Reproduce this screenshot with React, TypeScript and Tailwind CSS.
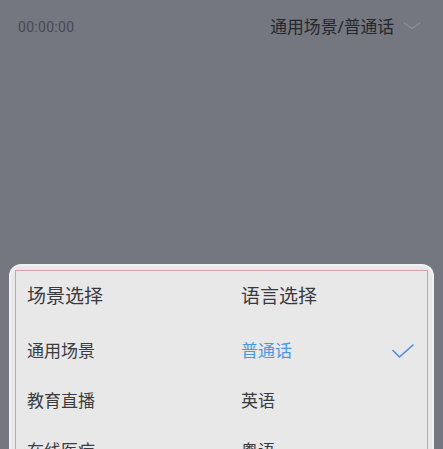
import React from "react";

const scenes = ["通用场景", "教育直播", "在线医疗"];
const langs = ["普通话", "英语", "粤语"];

export default function App() {
  return (
    <div
      className="h-[449px] w-full overflow-hidden bg-[#747680]"
      style={{ fontFamily: '"Noto Sans", "Noto Sans CJK SC", sans-serif' }}
    >
      {/* Top bar */}
      <header className="flex h-[54px] items-center justify-between pl-[18px] pr-[22px]">
        <span className="text-[14px] tracking-[0.3px] text-[#474953]" style={{ fontFamily: "Roboto, sans-serif" }}>
          00:00:00
        </span>
        <div className="flex items-center gap-[9px]">
          <span className="text-[16.8px] text-[#26272c]">通用场景/普通话</span>
          <svg width="18" height="10" viewBox="0 0 18 10" fill="none" className="mt-[-2px]">
            <path d="M1 2 L9 7.5 L17 2" stroke="#8c8e98" strokeWidth="1.5" strokeLinecap="round" strokeLinejoin="round" />
          </svg>
        </div>
      </header>

      {/* Bottom sheet */}
      <div className="mx-[9px] mt-[210px] h-[200px] rounded-t-[12px] border-2 border-b-0 border-[#f1f1f3] bg-[#e8e8e9] px-[4px] pt-[4px]">
        <div className="h-full border border-b-0 border-[#d3a2a9] pl-[11px] pr-[13px] pt-[12px]">
          <div className="flex text-[19px] leading-[26px] text-[#38393d]">
            <div className="w-[214px]">场景选择</div>
            <div>语言选择</div>
          </div>
          <div className="mt-[17px]">
            {scenes.map((s, i) => (
              <div key={s} className="flex h-[50px] items-center text-[17px] text-[#3b3c40]">
                <div className="w-[214px]">{s}</div>
                <div className="flex flex-1 items-center justify-between">
                  <span className={i === 0 ? "text-[#4a97e4]" : ""}>{langs[i]}</span>
                  {i === 0 && (
                    <svg width="22" height="14" viewBox="0 0 22 14" fill="none">
                      <path d="M1 6.5 L7.5 13 L21 1" stroke="#4a8fde" strokeWidth="1.6" strokeLinecap="round" strokeLinejoin="round" />
                    </svg>
                  )}
                </div>
              </div>
            ))}
          </div>
        </div>
      </div>
    </div>
  );
}
